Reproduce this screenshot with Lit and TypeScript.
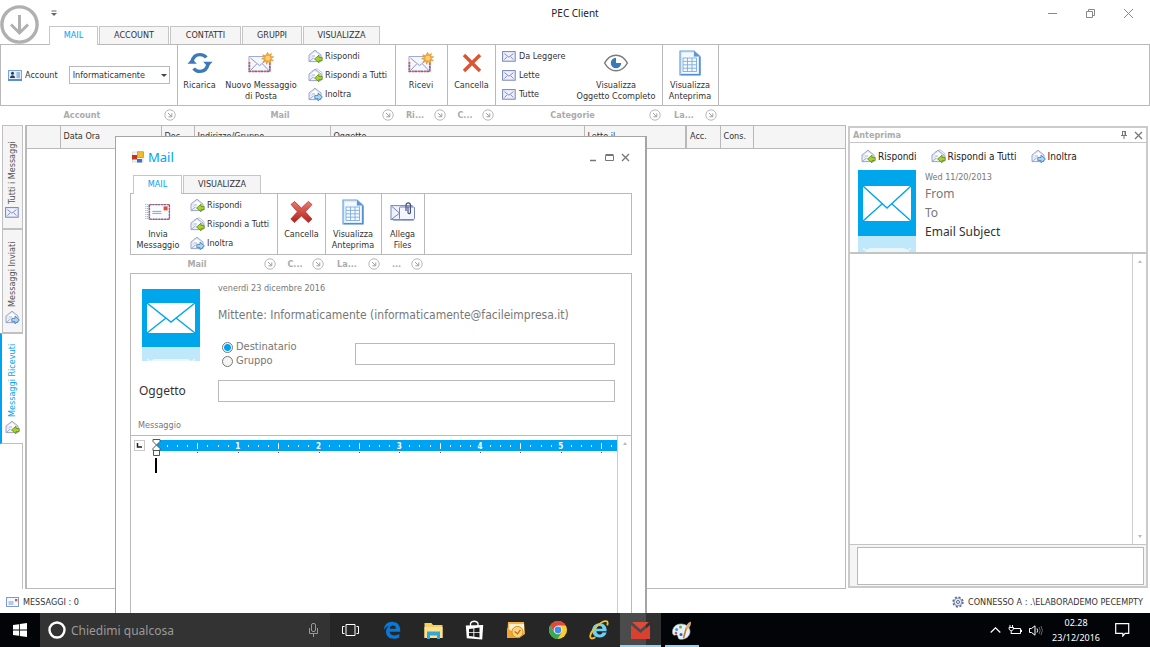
import { LitElement, html, svg, css, nothing, TemplateResult } from "lit";
import { customElement, state } from "lit/decorators.js";
import { classMap } from "lit/directives/class-map.js";

type Icon = TemplateResult;

const arrowLeft = svg`<path d="M14.2 8.400h-3.200V6.200L6.600 10l4.400 3.800v-2.200h3.200z" fill="#a9d02c" stroke="#5c8a12" stroke-width=".8"/>`;
const arrowRight = svg`<path d="M6.800 8.400H10V6.200l4.400 3.800-4.400 3.800v-2.200H6.800z" fill="#a8d4f5" stroke="#3f78b8" stroke-width=".8"/>`;
const openMail = svg`<path d="M1 6 7 1.200 13 6v6.600H1z" fill="#eef2fb" stroke="#8e9cc6" stroke-width=".9"/>
  <path d="M3 5.200 7 2.400l4 2.800v3L7 10 3 8.200z" fill="#fff" stroke="#b7c1de" stroke-width=".5"/>
  <path d="M1 12.600 5.400 9M4 7h3" fill="none" stroke="#8e9cc6" stroke-width=".8"/>`;

const reply: Icon = html`<svg width="15" height="15" viewBox="0 0 15 15">${openMail}${arrowLeft}</svg>`;
const replyAll: Icon = html`<svg width="15" height="15" viewBox="0 0 15 15">
  <path d="M4 3.400 9 .6l5 4v6" fill="#fff" stroke="#a8b3d4" stroke-width=".8"/>${openMail}${arrowLeft}</svg>`;
const forward: Icon = html`<svg width="15" height="15" viewBox="0 0 15 15">${openMail}${arrowRight}</svg>`;

const smallMail: Icon = html`<svg width="14" height="11" viewBox="0 0 14 11">
  <rect x=".6" y=".6" width="12.6" height="9.6" fill="#eef1fb" stroke="#7682bd"/>
  <path d="m2.400 2.600 4.500 3.600 4.500-3.600M2.400 8.600l2.800-3M11.400 8.600l-2.800-3" fill="none" stroke="#7682bd" stroke-width=".9"/></svg>`;

const card: Icon = html`<svg width="14" height="11" viewBox="0 0 14 11">
  <rect x=".5" y=".5" width="13" height="10" fill="#e3effc" stroke="#7ba5da"/>
  <rect x="0" y="9" width="14" height="2" fill="#5b8fce"/>
  <circle cx="4.500" cy="3.300" r="1.500" fill="#2c3c5c"/><path d="M2 8c0-3.600 5-3.600 5 0z" fill="#2c3c5c"/>
  <path d="M8.500 3h3.500M8.500 5h3.500M8.500 7h3.500" stroke="#4b78b4" stroke-width=".9"/></svg>`;

const refresh: Icon = html`<svg width="26" height="22" viewBox="0 0 26 22">
  <path d="M5 9.600C6 4.800 9.200 2.600 13 2.600c2.600 0 4.800 1 6.300 3" fill="none" stroke="#3e7ab8" stroke-width="3.400"/>
  <path d="M21 12.400c-1 4.800-4.200 7-8 7-2.600 0-4.800-1-6.300-3" fill="none" stroke="#3e7ab8" stroke-width="3.400"/>
  <path d="M.4 11.800h9.400L5.100 6.800zM16.200 9.800h9.400L20.900 15z" fill="#3e7ab8"/></svg>`;

const newMail: Icon = html`<svg width="26" height="22" viewBox="0 0 26 22">
  <rect x="1" y="4.600" width="21" height="15" fill="#f4f7fd" stroke="#8b97bd" stroke-width=".8"/>
  <path d="M1.400 10v9.400h20.400V10" fill="none" stroke="#e2564c" stroke-width="1.700" stroke-dasharray="2.600 3.400"/>
  <path d="M1.400 10v9.400h20.400V10" fill="none" stroke="#4c74c4" stroke-width="1.700" stroke-dasharray="2.200 3.800" stroke-dashoffset="-3"/>
  <path d="m2.400 6 9.200 7.600L20 6.400M2.600 18.400l6-6.400M20.600 18.400l-6-6.400" fill="none" stroke="#8390bd" stroke-width=".9"/>
  <path d="m19.600.2 1.200 2.800 2.700-1.600-.8 3 3.100.4-2.600 1.800 2.200 2.200-3.100-.2.4 3.100-2.400-2-1.700 2.600-.7-3-2.900 1 1.500-2.700-3-.9 2.800-1.300-1.700-2.600 3 .8z" fill="#f2a93b" stroke="#d98617" stroke-width=".5"/>
  <circle cx="19.900" cy="6.200" r="2.400" fill="#fbd27c"/></svg>`;

const sendMail: Icon = html`<svg width="26" height="20" viewBox="0 0 26 20">
  <path d="M.8 2v16M2.400 2v16" stroke="#8ea4d8" stroke-width=".9" stroke-dasharray="1 1"/>
  <rect x="4" y="2.400" width="20.600" height="15" fill="#fbfcff" stroke="#a9b2cc" stroke-width=".8"/>
  <rect x="4.400" y="2.600" width="20" height="14.600" fill="none" stroke="#de4c42" stroke-width="1.400" stroke-dasharray="2.400 3.400"/>
  <rect x="4.400" y="2.600" width="20" height="14.600" fill="none" stroke="#4a6fc0" stroke-width="1.400" stroke-dasharray="2 3.800" stroke-dashoffset="-3"/>
  <path d="M7.400 9.400h9M7.400 11.400h9" stroke="#8ba2d6"/><rect x="18.600" y="4.400" width="4" height="4" fill="#d9503f"/></svg>`;

const cross: Icon = html`<svg width="20" height="20" viewBox="0 0 20 20">
  <path d="m2 2 16 16M18 2 2 18" stroke="#dc5434" stroke-width="3.400"/></svg>`;

const boldCross: Icon = html`<svg width="23" height="24" viewBox="0 0 23 24">
  <defs><linearGradient id="r" x1="0" y1="0" x2="0" y2="1"><stop offset="0" stop-color="#ea7a70"/><stop offset="1" stop-color="#b41f1b"/></linearGradient></defs>
  <path d="M1 4.400 4.600 1.600 11.400 8 18.400 1.400 22 4.600 15.400 11.800 22 19 18.400 22.600 11.400 16 4.400 22.600.8 19 7.400 11.800z" fill="url(#r)" stroke="#a92a24" stroke-width=".7" stroke-linejoin="round"/></svg>`;

const eye: Icon = html`<svg width="26" height="20" viewBox="0 0 26 20">
  <path d="M1.600 10C4.600 4.600 8.600 2.200 13 2.200S21.400 4.600 24.400 10C21.400 15.400 17.400 17.800 13 17.800S4.600 15.400 1.600 10z" fill="#fff" stroke="#7b7b7b" stroke-width="1.500"/>
  <path d="M13 4.800V10h5.200A5.200 5.200 0 1 1 13 4.800z" fill="#3b78b8"/></svg>`;

const sheet: Icon = html`<svg width="22" height="26" viewBox="0 0 22 26">
  <path d="M1 1h14l6 5.600V25H1z" fill="#dcebfa" stroke="#6ba0dc" stroke-width="1.200"/>
  <path d="M3 3h11v4h5v16H3z" fill="#fff" opacity=".7"/><path d="M15 1v5.600h6z" fill="#5e97d6"/>
  <rect x="4" y="8" width="13.500" height="13.500" fill="#f5faff" stroke="#7fabe0" stroke-width=".9"/>
  <path d="M4 11.400h13.500M4 14.800h13.500M4 18.200h13.500M8.500 8v13.500M13 8v13.500" stroke="#7fabe0" stroke-width=".9"/>
  <path d="M20.800 7v17.600H2" fill="none" stroke="#4f8ed2" stroke-width="1.400"/></svg>`;

const attach: Icon = html`<svg width="26" height="22" viewBox="0 0 26 22">
  <rect x="3" y="7" width="21" height="13" rx="1" fill="#a9b4d8"/>
  <rect x="1" y="4.600" width="21" height="14" fill="#eef1fa" stroke="#7785b4"/>
  <path d="m1.600 5.200 8 7-8 6" fill="none" stroke="#7785b4"/>
  <rect x="9.500" y="6" width="15" height="12.500" rx="1" fill="#f4f6fd" stroke="#7785b4"/>
  <path d="M16 10V4a2.200 2.200 0 0 1 4.400 0v7.500a1.200 1.200 0 0 1-2.400 0V5.500" fill="none" stroke="#46517c" stroke-width="1.200"/></svg>`;

const launcher: Icon = html`<svg width="12" height="12" viewBox="0 0 12 12">
  <circle cx="6" cy="6" r="5.200" fill="#fff" stroke="#b0b0b0" stroke-width=".9"/>
  <path d="m4 4 3.600 3.600M7.800 4.400v3.400H4.400" fill="none" stroke="#a0a0a0"/></svg>`;

const statusMail: Icon = html`<svg width="13" height="10" viewBox="0 0 13 10">
  <rect x=".5" y=".5" width="12" height="9" fill="#f4f8ff" stroke="#7f98cf"/><path d="M2.500 5h5M2.500 7h5" stroke="#7f98cf"/>
  <rect x="9" y="2" width="2.300" height="2.300" fill="#d9503f"/></svg>`;

const gear: Icon = html`<svg width="12" height="12" viewBox="0 0 12 12">
  <circle cx="6" cy="6" r="4.800" fill="none" stroke="#55688f" stroke-width="1.700" stroke-dasharray="2 1.770"/>
  <circle cx="6" cy="6" r="3.900" fill="#e6eaf3" stroke="#6d7ea5" stroke-width=".8"/><circle cx="6" cy="6" r="1.500" fill="#fff" stroke="#55688f"/></svg>`;

const formIcon: Icon = html`<svg width="12" height="12" viewBox="0 0 12 12">
  <rect x=".5" y="1" width="10.500" height="10" fill="#f4f4f4" stroke="#c9c9c9" stroke-width=".6"/>
  <rect x="0" y="4" width="5" height="4.500" fill="#c4321f"/><rect x="5.400" y=".8" width="6" height="5.800" fill="#f1bc2b" stroke="#c48f16" stroke-width=".7"/>
  <rect x="5" y="8" width="5" height="3.500" fill="#3d6fcb"/></svg>`;

const envelopeTile = (tall: boolean): Icon => html`<svg class="tile" width="58" height=${tall ? 82 : 72} viewBox="0 0 58 ${tall ? 82 : 72}">
  <rect width="58" height=${tall ? 66 : 58} fill="#00a6ec"/>
  <g transform="translate(5 ${tall ? 16 : 14})">
    <rect width="48" height=${tall ? 35 : 30} fill="#fff"/>
    <path d=${tall ? "M0 0l24 22L48 0M0 35l19-17M48 35 29 18" : "M0 0l24 19L48 0M0 30l19-15M48 30 29 15"} fill="none" stroke="#00a6ec" stroke-width="1.400"/>
  </g>
  <g transform="translate(0 ${tall ? 66 : 58})">
    <rect width="58" height="16" fill="#bfe8fa"/>
    <path d="M7 16c1-2 3-3.500 6-4h32c3 .5 5 2 6 4z" fill="#e9f7fd"/><path d="m5 12 5 4M53 12l-5 4" stroke="#e9f7fd" stroke-width="1.500"/>
  </g></svg>`;

interface Big { label: string[]; icon: Icon; width: number }
interface Small { label: string; icon: Icon }
interface Group { caption: string; width: number; body: TemplateResult }

const big = (b: Big) => html`<button class="big" style="width:${b.width}px">
  <span class="glyph">${b.icon}</span>${b.label.map((l) => html`<span>${l}</span>`)}</button>`;
const smalls = (items: Small[]) => html`<div class="stack">${items.map((i) => html`
  <button class="small"><span class="ico">${i.icon}</span>${i.label}</button>`)}</div>`;

const replies: Small[] = [
  { label: "Rispondi", icon: reply },
  { label: "Rispondi a Tutti", icon: replyAll },
  { label: "Inoltra", icon: forward },
];

const tabStrip = (tabs: [string, number][]) => html`<nav class="tabs">${tabs.map(([t, w], i) => html`
  <button class=${classMap({ tab: true, on: i === 0 })} style="width:${w}px">${t}</button>`)}</nav>`;

const ribbon = (groups: Group[]) => html`<div class="ribbon">${groups.map((g) => html`
  <section class="group" style="width:${g.width}px">
    <div class="tools">${g.body}</div>
    <div class="caption"><span>${g.caption}</span><button aria-label="Opzioni">${launcher}</button></div>
  </section>`)}<div class="rest"></div></div>`;

const INCH = 80.75;
const rulerMarks = () => {
  const out = [];
  for (let i = 1; i < 46; i++) {
    const x = (i * INCH) / 8;
    if (i % 8 === 0) out.push(svg`<text x=${x} y="9" text-anchor="middle">${i / 8}</text>`);
    else out.push(svg`<rect x=${Math.round(x)} y=${i % 4 ? 5 : 3} width="1" height=${i % 4 ? 2 : 6} fill="#fff"/>`);
    if (i % 4 === 0) out.push(svg`<rect x=${Math.round(x)} y="12" width="1" height="1" fill="#555"/>`);
  }
  return out;
};

const edge = html`<svg width="18" height="18" viewBox="0 0 18 18"><path d="M.8 9C1.200 3.600 4.700.8 9 .8c5.200 0 8.200 3.600 8.200 8v2H6.600c.2 2.400 2.200 3.600 4.800 3.600 1.900 0 3.600-.5 4.900-1.300v3.300c-1.500.9-3.300 1.400-5.500 1.400-4.800 0-7.800-2.800-7.800-7 0-2.700 1.400-4.700 3.400-6C4 5.400 2 6.800.8 9zM6.700 7.800h6.100c0-2-1-3.200-2.900-3.200S6.900 5.900 6.700 7.800z" fill="#0a78d7"/></svg>`;
const folder = html`<svg width="19" height="17" viewBox="0 0 19 17"><path d="M.5 1h7l1.500 2h9.500v13H.5z" fill="#f6cf63"/><path d="M.5 5h18v11H.5z" fill="#fbe28f"/><path d="M3 9.500h13V17h-3v-3.600H6V17H3z" fill="#33a6d8"/></svg>`;
const store = html`<svg width="19" height="20" viewBox="0 0 19 20"><path d="M5.500 6V3.500C6.500.5 12 .5 13 3.500V6" fill="none" stroke="#fff" stroke-width="1.300"/><path d="m.8 5.400 17.400-.4-1 14.400-15.400-1.200z" fill="#fff"/><path d="m4 9 4.400-.6v3.800H4zM9.300 8.300l5.200-.7v4.600H9.300zM4 13h4.400v3.600L4 16zM9.300 13h5.200v4.400l-5.200-.7z" fill="#1d1d1d"/></svg>`;
const outlook = html`<svg width="20" height="18" viewBox="0 0 20 18"><path d="M2 1h16l1 12-6 4H1z" fill="#f6b149"/><path d="M3 3h15v9H3z" fill="#fdf0d2"/><path d="M1 7l8 5 3 5H1z" fill="#f3a52f"/><circle cx="11.500" cy="11" r="5.600" fill="#f8d481" stroke="#d88c1b"/><path d="m8.600 10.400 3 2.400 2.800-4" fill="none" stroke="#c4700d" stroke-width="1.300"/></svg>`;
const chrome = html`<svg width="18" height="18" viewBox="0 0 18 18"><circle cx="9" cy="9" r="9" fill="#fbce2f"/><path d="M1.200 4.500A9 9 0 0 0 8.600 18l4.200-6.800L5 11z" fill="#39a757"/><path d="M1.200 4.500A9 9 0 0 1 16.800 4.500H9L5 11z" fill="#de4a3c"/><circle cx="9" cy="9" r="4.300" fill="#fff"/><circle cx="9" cy="9" r="3.400" fill="#4688f1"/></svg>`;
const ie = html`<svg width="20" height="20" viewBox="0 0 20 20"><path d="M17.600 12.400c-.9 3.200-3.600 5-7 5-4.400 0-7.400-2.800-7.400-7s3-7.200 7.400-7.200c4.600 0 7.300 3 7.100 8H7.400c.2 2 1.400 3.200 3.300 3.200 1.300 0 2.200-.4 2.700-2zM7.500 8.800h6c-.1-1.800-1.200-2.900-3-2.900s-2.900 1.200-3 2.900z" fill="#6fd0f5"/><path d="M18.200 5.400c.8-2.400.5-4-.9-4.200C12.600.4 1 11 1.200 16.800c.1 2.200 2.500 2.200 5.200.4" fill="none" stroke="#f2c32f" stroke-width="1.800"/></svg>`;
const redMail = html`<svg width="19" height="17" viewBox="0 0 19 17"><path d="M0 3l9.500 8L19 3v14H0z" fill="#d9402f"/><path d="M1 0h17L9.500 7.500z" fill="#e04a3b"/></svg>`;
const paint = html`<svg width="20" height="19" viewBox="0 0 20 19"><path d="M9 3C4 3 .5 6.500.5 11c0 3 1.500 3.500 3 3s2.500.5 2.500 2c0 2 2 2.500 4.500 2.200C15.500 17.500 18 14 18 10.500 18 6 14 3 9 3z" fill="#e9f1f8" stroke="#a9bccb" stroke-width=".6"/><circle cx="4.600" cy="8.500" r="1.500" fill="#3a9ee0"/><circle cx="8.500" cy="6" r="1.500" fill="#5cb544"/><circle cx="4" cy="12" r="1.300" fill="#e0483b"/><circle cx="9" cy="13.500" r="1.500" fill="#2c62b8"/><path d="m11.500 17 3-10.500" stroke="#c6792b" stroke-width="1.600"/><path d="M14 7.500c-.4-3 1.400-5.600 4.800-7 .6 3-.8 6-3 7.600z" fill="#d9b27c"/></svg>`;

@customElement("app-root")
export class AppRoot extends LitElement {
  @state() private recipient = "dest";

  static styles = css`
    :host {
      display: flex; flex-direction: column; height: 100vh; overflow: hidden; background: #fff; color: #333;
      font: 9px/11px "DejaVu Sans Condensed", "DejaVu Sans", sans-serif;
      --line: #b9b9b9; --blue: #00a2f2; --ui: "Noto Sans", "Open Sans", sans-serif;
    }
    * { box-sizing: border-box; }
    button, input, select, textarea { font: inherit; color: inherit; border: 0; background: none; padding: 0; margin: 0; border-radius: 0; outline: 0; }
    svg { display: block; flex: none; }

    .titlebar { height: 26px; flex: none; display: grid; grid-template-columns: 1fr auto 1fr; align-items: center; padding: 0 16px 0 51px; }
    .titlebar h1 { margin: 0; font: 10px/14px var(--ui); color: #222; padding-right: 35px; }
    .winctl { display: flex; justify-content: flex-end; gap: 27px; }
    .winctl button { width: 11px; height: 11px; }
    .logo { position: absolute; left: 0; top: 5px; }

    .tabs { display: flex; height: 18px; gap: 1px; flex: none; padding-left: 49px; position: relative; z-index: 1; }
    .tab { height: 18px; background: #f5f5f5; border: 1px solid #c6c6c6; border-bottom: 0; }
    .tab.on { background: #fff; color: var(--blue); height: 19px; padding-bottom: 1px; }

    .ribbon { display: flex; flex: none; }
    .group { flex: none; }
    .tools { height: 62px; border: 1px solid var(--line); border-left: 0; display: flex; }
    .group:first-child .tools { border-left: 1px solid var(--line); }
    .rest { flex: 1; height: 62px; border: 1px solid var(--line); border-left: 0; }
    .caption { display: flex; align-items: center; height: 18px; padding-right: 2px; color: #ababab; font-weight: bold; }
    .caption span { flex: 1; text-align: center; }
    .big { display: flex; flex-direction: column; align-items: center; white-space: nowrap; }
    .glyph { height: 35px; display: flex; align-items: center; flex: none; }
    .stack { display: flex; flex-direction: column; padding-top: 2px; }
    .small { display: flex; align-items: center; gap: 2px; height: 19px; white-space: nowrap; }
    .ico { width: 15px; }
    .account { display: flex; align-items: center; gap: 3px; padding-left: 7px; }
    .combo { position: relative; margin-left: 8px; }
    .combo select { appearance: none; width: 101px; height: 18px; border: 1px solid var(--line); padding: 0 3px; background: #fff; }
    .combo svg { position: absolute; right: 3px; top: 8px; pointer-events: none; }

    main { flex: 1; display: flex; min-height: 0; position: relative; padding-top: 1px; }
    .side { width: 25px; flex: none; display: flex; flex-direction: column; padding-right: 2px; }
    .vtab { writing-mode: vertical-rl; transform: rotate(180deg); display: flex; align-items: center; gap: 3px; height: 104px; width: 21px; margin-left: 2px; flex: none;
      background: #f5f5f5; border: 1px solid #c0c0c0; color: #555; padding: 7px 0; white-space: nowrap; }
    .vtab:first-child { padding-top: 10px; }
    .vtab .up { transform: rotate(180deg); }
    .vtab.on { height: 111px; width: 23px; margin-left: 0; background: #fff; color: var(--blue); border-right: 2px solid var(--blue); border-left: 0; padding-top: 8px; }
    .side .tail { flex: 1; border-right: 1px solid #c0c0c0; }
    .grid { flex: 1; border: 1px solid var(--line); border-left-width: 2px; min-width: 0; }
    table { width: 100%; border-collapse: collapse; table-layout: fixed; }
    th { height: 22px; padding: 0 0 0 3px; text-align: left; font-weight: normal; background: #f5f5f5; border-right: 1px solid var(--line); border-bottom: 1px solid var(--line); }
    th:last-child { border-right: 0; }
    th.split { border-right-width: 2px; }

    .preview { width: 300px; flex: none; margin: 1px 2px 1px 2px; border: 2px solid #cbcbcb; display: flex; flex-direction: column; background: #fff; }
    .phead { height: 15px; display: flex; align-items: center; gap: 6px; padding: 0 3px; border-bottom: 1px solid #c4c4c4; color: #ababab; font-weight: bold; }
    .phead span { flex: 1; }
    .pbar { display: flex; gap: 14px; padding: 4px 0 4px 11px; color: #222; font-size: 10px; }
    .pinfo { display: flex; gap: 9px; padding-left: 8px; height: 84px; border-bottom: 2px solid #c4c4c4; font: 12px/19px var(--ui); color: #777; }
    .pinfo p { margin: 0; }
    .pinfo .date { font: 9px/14px "DejaVu Sans Condensed", sans-serif; }
    .pinfo .subject { color: #333; }
    .scroll { flex: 1; display: flex; justify-content: flex-end; }
    .bar { width: 14px; border-left: 1px solid #ccc; display: flex; flex-direction: column; justify-content: space-between; align-items: center; padding: 6px 0; }
    .note { height: 42px; flex: none; border-top: 1px solid #c4c4c4; padding: 2px 2px 1px 7px; display: flex; background: #f5f5f5; }
    .note textarea { width: 100%; resize: none; background: #fff; border: 1px solid var(--line); }

    .dialog { position: absolute; left: 115px; top: 12px; bottom: -24px; width: 532px; background: #fff; border: 1px solid #a5a5a5; border-bottom: 0; border-right-width: 2px;
      padding: 0 13px 0 14px; display: flex; flex-direction: column; z-index: 2; }
    .dhead { display: flex; align-items: center; height: 38px; gap: 4px; padding: 2px 2px 0; }
    .dhead h2 { margin: 0; flex: 1; font: 13px/18px var(--ui); color: var(--blue); }
    .dhead .ctl { display: flex; gap: 7px; }
    .dhead .ctl button { width: 9px; height: 9px; }
    .dialog .tabs { padding-left: 3px; }
    .form { border: 1px solid var(--line); border-bottom: 0; flex: 1; display: flex; flex-direction: column; min-height: 0; color: #777; }
    .fields { display: grid; grid-template-columns: 87px 1fr; padding: 9px 16px 0 0; height: 161px; flex: none; align-content: start; }
    .fields .tile { margin: 6px 0 0 11px; }
    .info { display: flex; flex-direction: column; }
    .info p { margin: 0; }
    .from { font-size: 12px; line-height: 18px; padding-top: 12px; white-space: nowrap; }
    .to { display: flex; justify-content: space-between; padding-top: 16px; }
    .radios { padding-left: 4px; font-size: 11px; line-height: 14px; }
    .radios label { display: flex; align-items: center; gap: 3px; }
    .radios input { appearance: none; width: 11px; height: 11px; border: 1px solid #777; border-radius: 50%; background: #f5f5f5; }
    .radios input:checked { background: radial-gradient(circle, #00a2f2 0 3px, #fff 4px); }
    .box { border: 1px solid var(--line); height: 22px; background: #fff; }
    .to .box { width: 260px; margin-top: 3px; }
    .subj { display: contents; }
    .subj span { color: #333; font: 12px/22px var(--ui); padding-left: 8px; margin-top: 12px; }
    .subj input { margin-top: 12px; width: 100%; }
    .msg { padding: 18px 0 0 7px; }
    .editor { border-top: 1px solid var(--line); flex: 1; display: flex; min-height: 0; }
    .doc { flex: 1; display: flex; padding-top: 4px; gap: 12px; padding-left: 3px; overflow: hidden; }
    .page { position: relative; flex: 1; }
    .page text { font: bold 8px "DejaVu Sans Condensed", sans-serif; fill: #fff; }
    .ruler { background: linear-gradient(var(--blue), var(--blue)) 0 0 / 100% 11px no-repeat; overflow: hidden; }
    .hour { position: absolute; left: -5px; top: -1px; }
    .caret { width: 2px; height: 15px; background: #000; margin: 4px 0 0 -2px; }

    .status { height: 24px; flex: none; display: flex; align-items: center; justify-content: space-between; padding: 2px 7px 0 6px; }
    .status div { display: flex; align-items: center; gap: 4px; }
    .taskbar { height: 34px; flex: none; display: flex; background: #020408; z-index: 3; color: #fff; font: 10px/15px var(--ui); }
    .taskbar button { width: 41px; display: flex; align-items: center; justify-content: center; }
    .taskbar .start { width: 40px; }
    .search { width: 290px; background: #333; display: flex; align-items: center; padding: 0 12px 0 8px; gap: 5px; }
    .search input { flex: 1; min-width: 0; font-size: 12px; }
    .search input::placeholder { color: #9a9a9a; opacity: 1; }
    .apps { display: flex; width: 290px; background: #262626; }
    .apps button { flex: 1; }
    .taskbar .live { border-bottom: 2px solid #8fd3ee; padding-top: 2px; }
    .taskbar .live.red { background: linear-gradient(90deg, #4b4b4b 26px, #303030 26px); }
    .taskbar .live.last { width: 34px; margin-left: 4px; }
    .tray { margin-left: auto; display: flex; align-items: center; gap: 7px; padding-right: 20px; }
    .clock { text-align: center; margin: 0 8px 0 2px; font-size: 9px; }
  `;

  private mainGroups: Group[] = [
    { caption: "Account", width: 178, body: html`<div class="account">${card}<label for="acc">Account</label>
        <span class="combo"><select id="acc"><option>Informaticamente</option></select>
        <svg width="6" height="3" viewBox="0 0 6 3"><path d="M0 0h6L3 3z" fill="#444"/></svg></span></div>` },
    { caption: "Mail", width: 218, body: html`${big({ label: ["Ricarica"], icon: refresh, width: 43 })}${big({ label: ["Nuovo Messaggio", "di Posta"], icon: newMail, width: 80 })}<span style="width:7px"></span>${smalls(replies)}` },
    { caption: "Ri...", width: 52, body: big({ label: ["Ricevi"], icon: newMail, width: 50 }) },
    { caption: "C...", width: 48, body: big({ label: ["Cancella"], icon: cross, width: 47 }) },
    { caption: "Categorie", width: 167, body: html`<span style="width:6px"></span>${smalls([
        { label: "Da Leggere", icon: smallMail }, { label: "Lette", icon: smallMail }, { label: "Tutte", icon: smallMail },
      ])}<span style="flex:1"></span>${big({ label: ["Visualizza", "Oggetto Ccompleto"], icon: eye, width: 92 })}` },
    { caption: "La...", width: 56, body: big({ label: ["Visualizza", "Anteprima"], icon: sheet, width: 54 }) },
  ];

  private dialogGroups: Group[] = [
    { caption: "Mail", width: 148, body: html`${big({ label: ["Invia", "Messaggio"], icon: sendMail, width: 54 })}<span style="width:5px"></span>${smalls(replies)}` },
    { caption: "C...", width: 48, body: big({ label: ["Cancella"], icon: boldCross, width: 47 }) },
    { caption: "La...", width: 56, body: big({ label: ["Visualizza", "Anteprima"], icon: sheet, width: 54 }) },
    { caption: "...", width: 43, body: big({ label: ["Allega", "Files"], icon: attach, width: 41 }) },
  ];

  private columns: [string, number | null][] = [
    ["", 33], ["Data Ora", 101], ["Doc.", 33], ["Indirizzo/Gruppo", 136], ["Oggetto", 254], ["Letto il", 102], ["Acc.", 34], ["Cons.", 33], ["", null],
  ];

  private sideTabs: [string, Icon][] = [["Tutti i Messaggi", smallMail], ["Messaggi Inviati", forward], ["Messaggi Ricevuti", reply]];

  private dialog() {
    return html`<div class="dialog" role="dialog" aria-label="Mail">
      <header class="dhead">${formIcon}<h2>Mail</h2><div class="ctl">
        <button aria-label="Riduci"><svg width="9" height="9"><path d="M1 7.500h6" stroke="#777" stroke-width="1.500"/></svg></button>
        <button aria-label="Ingrandisci"><svg width="9" height="9"><path d="M.5 2.500h8v5h-8zM.5 1.500h8" fill="none" stroke="#777"/></svg></button>
        <button aria-label="Chiudi"><svg width="9" height="9"><path d="m1 1 7 7M8 1 1 8" stroke="#777" stroke-width="1.300"/></svg></button>
      </div></header>
      ${tabStrip([["MAIL", 49], ["VISUALIZZA", 78]])}
      ${ribbon(this.dialogGroups)}
      <form class="form">
        <div class="fields">
          ${envelopeTile(false)}
          <div class="info">
            <p>venerdì 23 dicembre 2016</p>
            <p class="from">Mittente: Informaticamente (informaticamente@facileimpresa.it)</p>
            <div class="to">
              <div class="radios">
                <label><input type="radio" name="k" .checked=${this.recipient === "dest"} @change=${() => (this.recipient = "dest")} />Destinatario</label>
                <label><input type="radio" name="k" .checked=${this.recipient === "group"} @change=${() => (this.recipient = "group")} />Gruppo</label>
              </div>
              <input class="box" aria-label="Destinatario" />
            </div>
          </div>
          <label class="subj"><span>Oggetto</span><input class="box" /></label>
          <div class="msg">Messaggio</div>
        </div>
        <div class="editor">
          <div class="doc">
            <svg class="corner" width="11" height="11"><rect x=".5" y=".5" width="10" height="10" fill="#fff" stroke="#c9c9c9"/><path d="M3.500 3v4H8" fill="none" stroke="#222" stroke-width="1.500"/></svg>
            <div class="page" tabindex="0">
              <svg class="ruler" width="100%" height="14">${rulerMarks()}</svg>
              <svg class="hour" width="9" height="17" viewBox="0 0 9 17"><path d="M1 .5h7v2L4.500 6 8 9.500v2H1v-2L4.500 6 1 2.500zM1.500 11.500h6v5h-6z" fill="#fff" stroke="#555"/></svg>
              <div class="caret"></div>
            </div>
          </div>
          <div class="bar"><svg width="4" height="3"><path d="M0 3 2 0l2 3z" fill="#bbb"/></svg></div>
        </div>
      </form>
    </div>`;
  }

  render() {
    return html`
      <svg class="logo" width="40" height="40" viewBox="0 0 40 40"><circle cx="19.500" cy="19.500" r="17.600" fill="#fff" stroke="#b0b0b0" stroke-width="3.400"/>
        <path d="M19.500 10v17M11 19.500l8.500 8.500 8.500-8.500" fill="none" stroke="#b0b0b0" stroke-width="3"/></svg>
      <header class="titlebar">
        <svg width="6" height="6"><path d="M.5 1h5" stroke="#666"/><path d="M0 3h6L3 6z" fill="#666"/></svg>
        <h1>PEC Client</h1>
        <div class="winctl">
          <button aria-label="Riduci"><svg width="11" height="11"><path d="M1 5.500h9" stroke="#888"/></svg></button>
          <button aria-label="Ripristina"><svg width="11" height="11"><path d="M1.500 3.500h6v6h-6zM3.500 3.500v-2h6v6h-2" fill="none" stroke="#888"/></svg></button>
          <button aria-label="Chiudi"><svg width="11" height="11"><path d="m1 1 9 9M10 1 1 10" stroke="#888"/></svg></button>
        </div>
      </header>
      ${tabStrip([["MAIL", 49], ["ACCOUNT", 70], ["CONTATTI", 71], ["GRUPPI", 60], ["VISUALIZZA", 77]])}
      ${ribbon(this.mainGroups)}
      <main>
        <nav class="side">
          ${this.sideTabs.map(([t, i], n) => html`<button class=${classMap({ vtab: true, on: n === 2 })}><span class="up">${i}</span>${t}</button>`)}
          <div class="tail"></div>
        </nav>
        <div class="grid"><table>
          <colgroup>${this.columns.map(([, w]) => html`<col style=${w ? `width:${w}px` : nothing} />`)}</colgroup>
          <thead><tr>${this.columns.map(([c], n) => html`<th class=${n === 5 ? "split" : ""}>${c}</th>`)}</tr></thead>
        </table></div>
        <aside class="preview">
          <header class="phead"><span>Anteprima</span>
            <svg width="8" height="8"><path d="M2.500 0v4.500h3V0M5 0v4.500M1 4.500h6M4 5v3M2 .5h4" fill="none" stroke="#777"/></svg>
            <svg width="9" height="9"><path d="m1 1 7 7M8 1 1 8" stroke="#777" stroke-width="1.300"/></svg></header>
          <div class="pbar">${replies.map((r) => html`<button class="small"><span class="ico">${r.icon}</span>${r.label}</button>`)}</div>
          <div class="pinfo">${envelopeTile(true)}<div><p class="date">Wed 11/20/2013</p><p>From</p><p>To</p><p class="subject">Email Subject</p></div></div>
          <div class="scroll"><div class="bar"><svg width="4" height="3"><path d="M0 3 2 0l2 3z" fill="#bbb"/></svg><svg width="4" height="3"><path d="M0 0h4L2 3z" fill="#bbb"/></svg></div></div>
          <div class="note"><textarea aria-label="Nota"></textarea></div>
        </aside>
        ${this.dialog()}
      </main>
      <footer class="status"><div>${statusMail}MESSAGGI : 0</div><div>${gear}CONNESSO A : .\\ELABORADEMO PECEMPTY</div></footer>
      <div class="taskbar">
        <button class="start" aria-label="Start"><svg width="14" height="14"><path d="m0 2 6-.8v5.400H0zM6.800 1.100 14 0v6.600H6.800zM0 7.400h6v5.400L0 12zM6.800 7.400H14V14l-7.200-1.100z" fill="#fff"/></svg></button>
        <div class="search"><svg width="18" height="18"><circle cx="9" cy="9" r="7.500" fill="none" stroke="#fff" stroke-width="2.400"/></svg>
          <input placeholder="Chiedimi qualcosa" aria-label="Cerca" />
          <svg width="9" height="14"><rect x="2.500" y=".5" width="4" height="8" rx="1.500" fill="none" stroke="#999"/><path d="M.5 5v5.500h8V5M4.500 10.500V14" fill="none" stroke="#999"/></svg></div>
        <div class="apps">
          <button aria-label="Visualizzazione attività"><svg width="17" height="12"><path d="M4 .5h9v11H4zM2.500 2.500h-2v7h2M14.500 2.500h2v7h-2" fill="none" stroke="#fff"/></svg></button>
          ${[["Edge", edge], ["Esplora file", folder], ["Store", store], ["Outlook", outlook], ["Chrome", chrome], ["Internet Explorer", ie]].map(([n, i]) => html`<button aria-label=${n as string}>${i}</button>`)}
        </div>
        <button class="live red" aria-label="PEC Client">${redMail}</button>
        <button class="live last" aria-label="Paint">${paint}</button>
        <div class="tray">
          <svg width="11" height="6"><path d="m.7 5.500 4.800-4.700 4.800 4.700" fill="none" stroke="#fff" stroke-width="1.200"/></svg>
          <svg width="14" height="11"><path d="M5 3.500h7.500v5H3M12.500 5h1v2M2 3V0M4.500 3V0M1 2.500h4.500c0 2-.5 3-2.200 3S1 4.500 1 2.500zM3.200 5.500V9" fill="none" stroke="#fff"/></svg>
          <svg width="14" height="11"><path d="M.5 3.500h2L6 .8v9.400L2.500 7.500h-2z" fill="none" stroke="#fff"/><path d="M8 3.500q1.300 2 0 4" fill="none" stroke="#fff"/><path d="M10 2q2.300 3.500 0 7M12 1q2.800 4.500 0 9" fill="none" stroke="#666"/></svg>
          <div class="clock">02.28<br />23/12/2016</div>
          <svg width="15" height="14"><path d="M.7.700h13v9.600h-3.600L7.800 13V10.300H.7z" fill="none" stroke="#fff" stroke-width="1.200"/></svg>
        </div>
      </div>`;
  }
}
